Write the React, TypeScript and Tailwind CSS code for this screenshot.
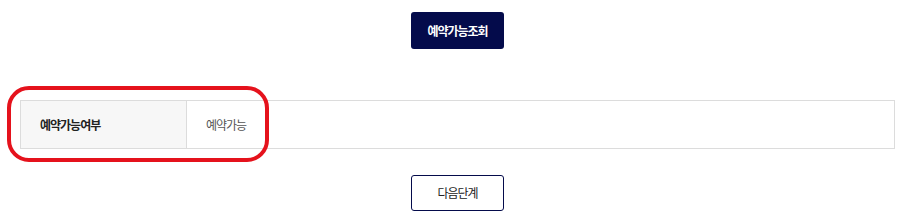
import React from "react";

export default function App() {
  return (
    <div
      className="w-[904px] h-[220px] bg-white"
      style={{ fontFamily: '"Noto Sans CJK KR", "Noto Sans", sans-serif' }}
    >
      <div className="ml-[20px] w-[875px] pt-[12px] flex flex-col items-center">
        <button className="w-[93px] h-[37px] rounded-[3px] bg-[#040b4b] text-white text-[12px] font-bold tracking-[-1px]">
          예약가능조회
        </button>
        <div className="relative mt-[51px] w-full">
          <div className="flex h-[49px] border border-[#dcdcdc]">
            <div className="w-[166px] bg-[#f7f7f7] border-r border-[#dcdcdc] flex items-center pl-[19px] text-[12px] font-bold text-[#222] tracking-[-1px]">
              예약가능여부
            </div>
            <div className="flex-1 flex items-center pl-[19px] text-[12px] text-[#555] tracking-[-1px]">
              예약가능
            </div>
          </div>
          <div className="absolute left-[-13px] top-[-14px] w-[262px] h-[76px] border-[4px] border-[#e5121c] rounded-[22px] pointer-events-none" />
        </div>
        <button className="mt-[26px] w-[93px] h-[36px] rounded-[3px] border border-[#040b4b] bg-white text-[#222] text-[12px] tracking-[-1px]">
          다음단계
        </button>
      </div>
    </div>
  );
}
